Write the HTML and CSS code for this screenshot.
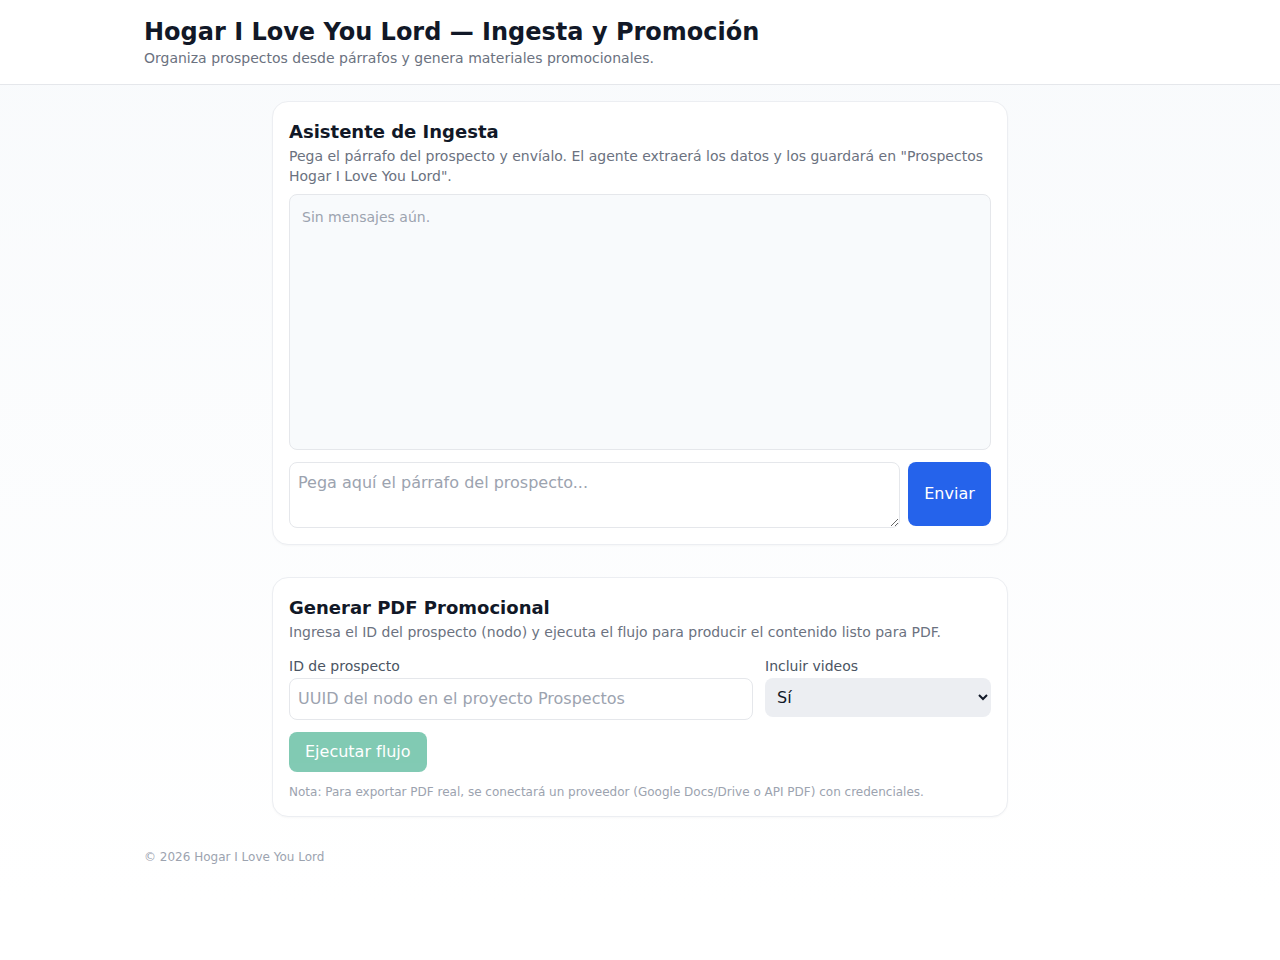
FILE: index.html
```html
<!DOCTYPE html>
<html lang="es">
<head>
    <meta charset="UTF-8">
    <title>Hogar I Love You Lord — Ingesta y Promoción</title>
    <link rel="stylesheet" href="styles.css">
</head>
<body>
<header class="top">
    <div class="wrap">
        <h1>Hogar I Love You Lord — Ingesta y Promoción</h1>
        <p>Organiza prospectos desde párrafos y genera materiales promocionales.</p>
    </div>
</header>

<main class="main">
    <!-- chat de ingesta -->
    <section class="card">
        <h2>Asistente de Ingesta</h2>
        <p class="desc">Pega el párrafo del prospecto y envíalo. El agente extraerá los datos y los guardará en "Prospectos Hogar I Love You Lord".</p>
        <div class="messages">
            <div class="empty">Sin mensajes aún.</div>
        </div>
        <form class="send">
            <textarea class="msg-input" placeholder="Pega aquí el párrafo del prospecto..."></textarea>
            <button type="button" class="btn-send">Enviar</button>
        </form>
    </section>

    <!-- generar pdf -->
    <section class="card">
        <h2>Generar PDF Promocional</h2>
        <p class="desc">Ingresa el ID del prospecto (nodo) y ejecuta el flujo para producir el contenido listo para PDF.</p>
        <div class="fields">
            <label class="field">
                <span>ID de prospecto</span>
                <input type="text" class="text-input" placeholder="UUID del nodo en el proyecto Prospectos">
            </label>
            <label class="field">
                <span>Incluir videos</span>
                <select class="select">
                    <option>Sí</option>
                    <option>No</option>
                </select>
            </label>
        </div>
        <button type="button" class="btn-run" disabled>Ejecutar flujo</button>
        <p class="note">Nota: Para exportar PDF real, se conectará un proveedor (Google Docs/Drive o API PDF) con credenciales.</p>
    </section>
</main>

<footer class="wrap footer">© 2026 Hogar I Love You Lord</footer>
</body>
</html>
```

FILE: styles.css
```css
* {
    margin: 0;
    padding: 0;
    box-sizing: border-box;
}

html {
    background: #ffffff;
}

body {
    font-family: "DejaVu Sans", "Liberation Sans", sans-serif;
    color: #0f172a;
    background: linear-gradient(#f8fafc, #ffffff 900px);
    min-height: 960px;
}

.wrap {
    width: 992px;
    margin: 0 auto;
}

.top {
    background: #ffffff;
    border-bottom: 1px solid #e5e7eb;
    padding: 16px 0;
}

.top h1 {
    font-size: 24px;
    line-height: 32px;
    font-weight: bold;
    color: #111827;
}

.top p {
    font-size: 14px;
    line-height: 20px;
    color: #6b7280;
}

.main {
    width: 736px;
    margin: 0 auto;
    padding-top: 16px;
    display: flex;
    flex-direction: column;
    gap: 32px;
}

.card {
    background: #ffffff;
    border: 1px solid #eceef2;
    border-radius: 16px;
    padding: 16px;
    box-shadow: 0 1px 2px rgba(0, 0, 0, 0.03);
}

.card h2 {
    font-size: 18px;
    line-height: 28px;
    font-weight: bold;
    color: #111827;
}

.desc {
    font-size: 14px;
    line-height: 20px;
    color: #6b7280;
}

.messages {
    margin-top: 8px;
    height: 256px;
    background: #f8fafc;
    border: 1px solid #e5e7eb;
    border-radius: 8px;
    padding: 12px;
}

.empty {
    font-size: 14px;
    line-height: 20px;
    color: #9ca3af;
}

.send {
    margin-top: 12px;
    display: flex;
    gap: 8px;
    align-items: flex-start;
}

.msg-input {
    flex: 1;
    height: 66px;
    border: 1px solid #e5e7eb;
    border-radius: 8px;
    padding: 10px 8px;
    font-family: inherit;
    font-size: 16px;
    line-height: 20px;
    color: #111827;
    resize: vertical;
}

.msg-input::placeholder,
.text-input::placeholder {
    color: #9ca3af;
}

.btn-send {
    width: 83px;
    height: 64px;
    background: #2563eb;
    color: #ffffff;
    border: none;
    border-radius: 8px;
    font-family: inherit;
    font-size: 16px;
    padding-bottom: 2px;
}

.fields {
    margin-top: 14px;
    display: grid;
    grid-template-columns: 1fr 226px;
    gap: 12px;
    align-items: start;
}

.field {
    display: flex;
    flex-direction: column;
    gap: 2px;
}

.field span {
    font-size: 14px;
    line-height: 20px;
    color: #4b5563;
}

.text-input {
    height: 42px;
    border: 1px solid #e5e7eb;
    border-radius: 8px;
    padding: 0 8px 2px;
    font-family: inherit;
    font-size: 16px;
    color: #111827;
}

.select {
    height: 39px;
    border: none;
    border-radius: 8px;
    padding: 0 8px;
    background: #eceef2;
    font-family: inherit;
    font-size: 16px;
    color: #111827;
}

.btn-run {
    margin-top: 12px;
    height: 40px;
    padding: 0 16px 2px;
    background: #059669;
    opacity: 0.5;
    color: #ffffff;
    border: none;
    border-radius: 8px;
    font-family: inherit;
    font-size: 16px;
}

.note {
    margin-top: 12px;
    font-size: 12px;
    line-height: 16px;
    color: #9ca3af;
}

.footer {
    margin-top: 32px;
    font-size: 12px;
    line-height: 16px;
    color: #9ca3af;
}
```
